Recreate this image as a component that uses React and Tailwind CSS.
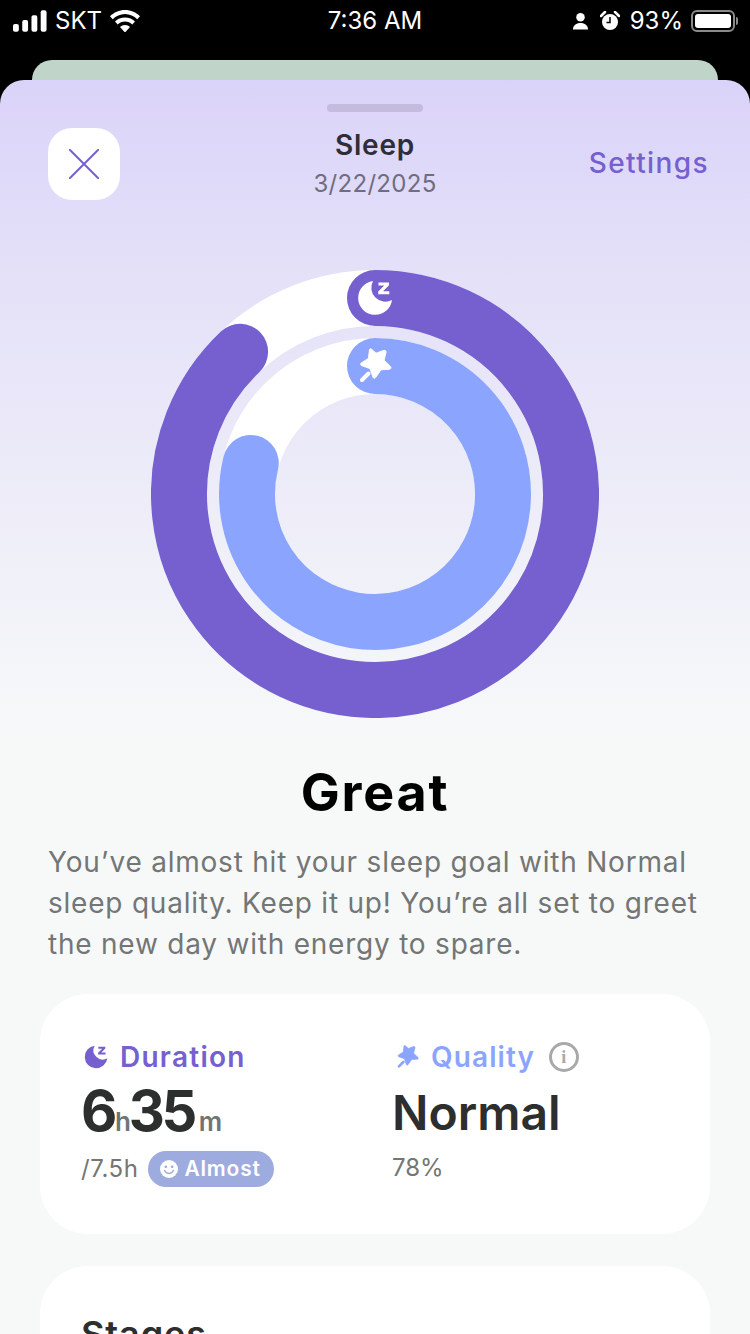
import React from "react";

const FONT = "font-['Inter','Noto_Sans',sans-serif]";

const polar = (r, deg) => {
    const a = (deg * Math.PI) / 180;
    return [224 + r * Math.sin(a), 224 - r * Math.cos(a)];
};

const arcPath = (r, deg) => {
    const [x, y] = polar(r, deg);
    const large = deg > 180 ? 1 : 0;
    return `M224 ${224 - r} A${r} ${r} 0 ${large} 1 ${x} ${y}`;
};

const MoonIcon = ({ className, fill }) => (
    <svg viewBox="0 0 36 36" className={className}>
        <path
            d="M16 1 A17 17 0 1 0 35 20 A14 14 0 0 1 16 1Z"
            fill={fill}
        />
        <path
            d="M21.500 2.500h10.500v2.800l-6 6h6.300v3H21.200v-2.800l6-6h-5.700Z"
            fill={fill}
        />
    </svg>
);

const WandIcon = ({ className, fill }) => (
    <svg viewBox="0 0 36 36" className={className}>
        <path
            d="M10.500 1.500 C11 .5 12 .6 12.600 1.300 L17 5.200 L24.800 2.400 C26.200 2 27.300 3 27 4.400 L25 12.300 L31.500 18.600 C32.400 19.600 32 21 30.600 21.200 L22 21.800 L16.600 29.600 C15.800 30.600 14.400 30.400 14 29.200 L11 20.600 L2.600 17.600 C1.400 17.200 1.200 15.800 2.200 15 L9.400 10.400 Z"
            fill={fill}
            stroke={fill}
            strokeLinejoin="round"
        />
        <path d="M9.500 25.500 L3 32" stroke={fill} strokeWidth="4" strokeLinecap="round" />
    </svg>
);

const Rings = () => (
    <svg viewBox="0 0 448 448" className="w-[448px] h-[448px]">
        <circle cx="224" cy="224" r="196" fill="none" stroke="#ffffff" strokeWidth="56" />
        <circle cx="224" cy="224" r="128" fill="none" stroke="#ffffff" strokeWidth="56" />
        <path d={arcPath(196, 316.5)} fill="none" stroke="#7660d0" strokeWidth="56" strokeLinecap="round" />
        <path d={arcPath(128, 284)} fill="none" stroke="#8ba5fe" strokeWidth="56" strokeLinecap="round" />
    </svg>
);

const StatusBar = () => (
    <div className="h-[60px] shrink-0 flex justify-between items-start pt-[8px] pl-[13px] pr-[12px] text-white text-[24px] leading-[26px] relative">
        <div className="flex items-center gap-[6px]">
            <svg viewBox="0 0 36 22" className="w-[35px] h-[22px]" fill="#fff">
                <rect x="0" y="14" width="6" height="8" rx="2" />
                <rect x="9.500" y="10" width="6" height="12" rx="2" />
                <rect x="19" y="5" width="6" height="17" rx="2" />
                <rect x="28.500" y="0" width="6" height="22" rx="2" />
            </svg>
            <span className="w-[50px] ml-[1px]">SKT</span>
            <svg viewBox="0 0 30 22" className="w-[30px] h-[22px] -ml-[1px]" fill="#fff">
                <path d="M15 0C9 0 4 2.500 0 6.200l2.700 3C6 6.200 10.200 4 15 4s9 2.200 12.300 5.200l2.700-3C26 2.500 21 0 15 0Z" />
                <path d="M15 7.500c-4 0-7.400 1.500-10 3.900l2.700 3c1.900-1.700 4.500-2.900 7.300-2.900s5.400 1.200 7.300 2.900l2.700-3c-2.600-2.400-6-3.900-10-3.900Z" />
                <path d="M15 15c-2 0-3.700.7-5 2l5 5.500 5-5.500c-1.300-1.300-3-2-5-2Z" />
            </svg>
        </div>
        <span className="absolute left-0 right-0 text-center">7:36 AM</span>
        <div className="flex items-center">
            <svg viewBox="0 0 18 18" className="w-[17px] h-[18px]" fill="#fff">
                <circle cx="9" cy="5" r="4.500" />
                <path d="M1 18c0-4.500 3.500-7 8-7s8 2.500 8 7Z" />
            </svg>
            <svg viewBox="0 0 20 20" className="w-[20px] h-[20px] ml-[11px]">
                <circle cx="10" cy="11" r="8" fill="#fff" />
                <path d="M10 6v5.500h-3.500" stroke="#000" strokeWidth="1.500" fill="none" />
                <path d="M1 5 L5 1 M19 5 L15 1" stroke="#fff" strokeWidth="2.500" strokeLinecap="round" />
            </svg>
            <span className="ml-[10px]">93%</span>
            <div className="ml-[8px] w-[44px] h-[22px] rounded-[6px] border-2 border-[#8a8a8a] p-[2px]">
                <div className="w-[36px] h-full rounded-[3px] bg-white" />
            </div>
            <div className="w-[2px] h-[8px] ml-[1px] rounded-r-full bg-[#8a8a8a]" />
        </div>
    </div>
);

const App = () => {
    return (
        <div className={`h-[1334px] overflow-hidden bg-black flex flex-col ${FONT}`}>
            <StatusBar />
            <div className="h-[20px] mx-[32px] bg-[#c0d4ca] rounded-t-[20px] shrink-0" />
            <div className="flex-1 shrink-0 rounded-t-[24px] bg-[linear-gradient(180deg,#dad3f9_0px,#e4e1f8_200px,#f7f9f9_660px)] relative">
                <div className="pt-[24px] flex justify-center">
                    <div className="w-[96px] h-[8px] rounded-full bg-[#c3bcdf]" />
                </div>
                <div className="mt-[16px] ml-[48px] mr-[41px] flex justify-between items-start">
                    <button className="w-[72px] h-[72px] rounded-[24px] bg-white flex items-center justify-center">
                        <svg viewBox="0 0 30 30" className="w-[30px] h-[30px]">
                            <path d="M1 1 L29 29 M29 1 L1 29" stroke="#7660d0" strokeWidth="2" strokeLinecap="round" />
                        </svg>
                    </button>
                    <div className="absolute left-0 right-0 top-[48px] text-center">
                        <div className="text-[28px] leading-[34px] font-semibold tracking-[0.8px] text-[#2f2e38]">Sleep</div>
                        <div className="text-[24px] leading-[32px] mt-[6px] tracking-[0.3px] text-[#6f6d7e]">3/22/2025</div>
                    </div>
                    <span className="text-[28px] leading-[34px] mt-[18px] font-medium tracking-[1.4px] text-[#7660d0]">Settings</span>
                </div>

                <div className="mt-[70px] flex justify-center relative">
                    <Rings />
                    <MoonIcon className="absolute left-[357px] top-[10px] w-[36px] h-[36px]" fill="#fff" />
                    <WandIcon className="absolute left-[359px] top-[78px] w-[36px] h-[36px]" fill="#fff" />
                </div>

                <h1 className="mt-[44px] text-center text-[52px] leading-[62px] font-bold tracking-[1.8px] text-black">Great</h1>
                <p className="mt-[18px] mx-[48px] text-[28px] leading-[41px] tracking-[0.78px] text-[#737674]">
                    You’ve almost hit your sleep goal with Normal sleep quality. Keep it up! You’re all set to greet the new day with energy to spare.
                </p>

                <div className="mt-[29px] mx-[40px] h-[240px] rounded-[48px] bg-white flex pt-[46px] pl-[41px]">
                    <div className="w-[311px]">
                        <div className="flex items-center gap-[12px] h-[34px] text-[28px] font-semibold tracking-[1.25px] text-[#7660d0]">
                            <MoonIcon className="w-[24px] h-[24px] ml-[3px]" fill="#7660d0" />
                            <span>Duration</span>
                        </div>
                        <div className="flex items-baseline mt-[6px] font-bold text-[#2d2e2e] text-[56px] leading-[62px] tracking-[-1.500px]">
                            6<span className="text-[26px] text-[#6f7573] font-semibold tracking-normal -ml-[1px]">h</span>
                            <span className="tracking-[-3.500px] -ml-[2px]">35</span>
                            <span className="text-[26px] text-[#6f7573] font-semibold tracking-normal ml-[5px]">m</span>
                        </div>
                        <div className="flex items-center -mt-[2px]">
                            <span className="text-[24px] leading-[36px] tracking-[0.6px] text-[#737674]">/7.5h</span>
                            <span className="ml-[9px] h-[36px] w-[126px] rounded-full bg-[#9eabdf] flex items-center justify-center gap-[6px] text-white text-[21px] font-semibold tracking-[0.8px]">
                                <svg viewBox="0 0 20 20" className="w-[18px] h-[18px]">
                                    <circle cx="10" cy="10" r="10" fill="#fff" />
                                    <circle cx="6.500" cy="7.500" r="1.500" fill="#9eabdf" />
                                    <circle cx="13.500" cy="7.500" r="1.500" fill="#9eabdf" />
                                    <path d="M5 11.500c1 2.500 3 3.500 5 3.500s4-1 5-3.500" stroke="#9eabdf" strokeWidth="1.500" fill="none" strokeLinecap="round" />
                                </svg>
                                Almost
                            </span>
                        </div>
                    </div>
                    <div>
                        <div className="flex items-center h-[34px] text-[28px] font-semibold tracking-[1.1px] text-[#8ba5fe]">
                            <WandIcon className="w-[24px] h-[24px] ml-[5px]" fill="#8ba5fe" />
                            <span className="ml-[10px]">Quality</span>
                            <span className="ml-[14px] w-[30px] h-[30px] rounded-full border-[3px] border-[#a9a9a9] flex items-center justify-center font-['Liberation_Serif',serif] text-[18px] leading-none font-bold text-[#a9a9a9]">i</span>
                        </div>
                        <div className="mt-[8px] font-semibold text-[#2d2e2e] text-[48px] leading-[62px]">Normal</div>
                        <div className="mt-[6px] text-[24px] leading-[36px] text-[#737674]">78%</div>
                    </div>
                </div>

                <div className="mt-[32px] mx-[40px] h-[120px] rounded-t-[48px] bg-white pt-[46px] pl-[41px] text-[36px] leading-[44px] font-semibold tracking-[0.900px] text-[#2d2e2e]">
                    Stages
                </div>
            </div>
        </div>
    );
};

export default App;
